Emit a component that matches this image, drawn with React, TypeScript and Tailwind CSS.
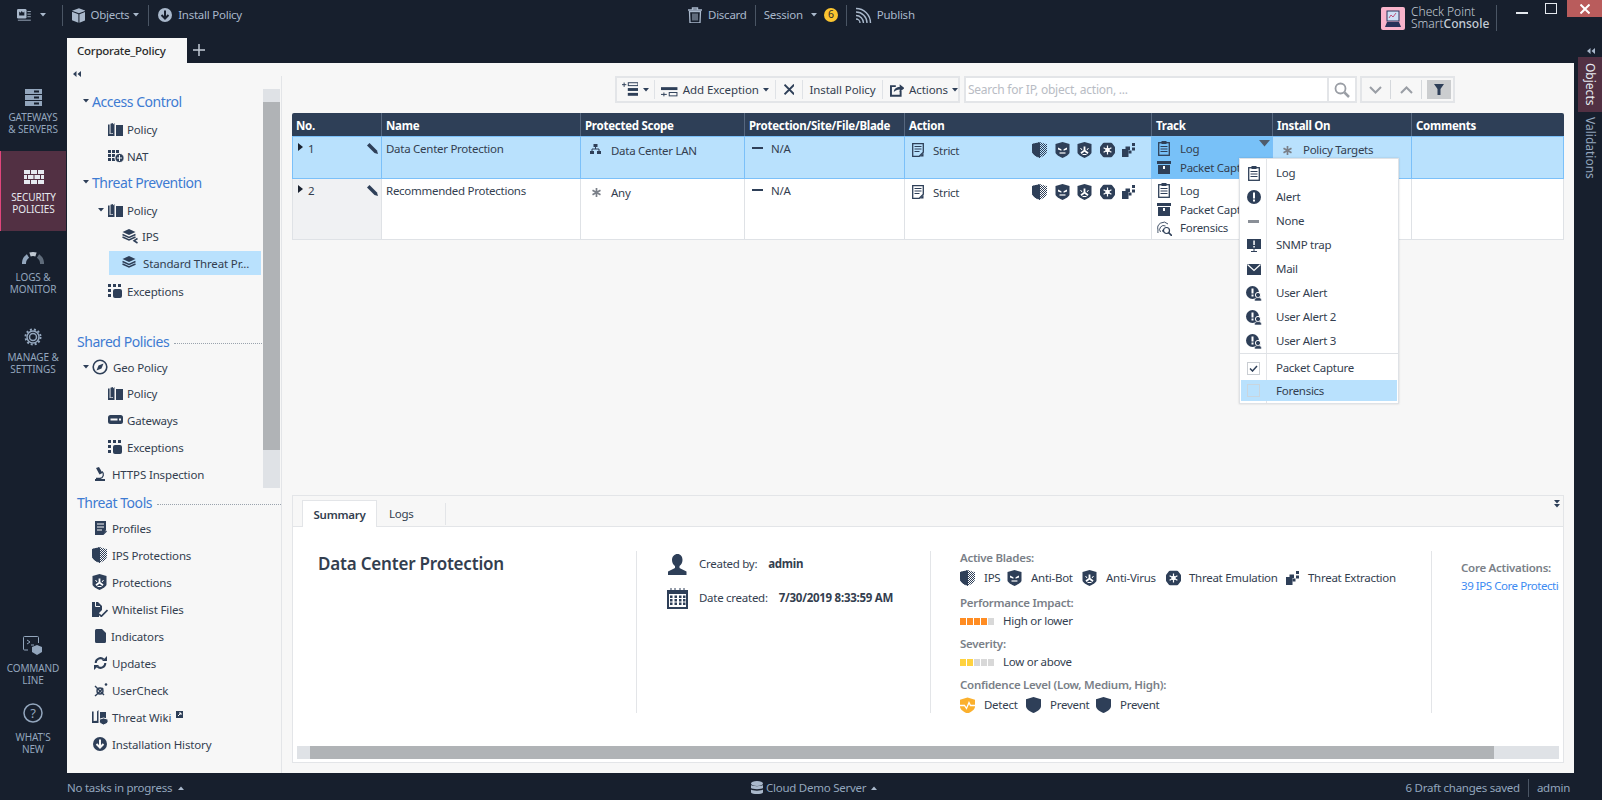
import React from "react";

const NAVY = "#2e3f58";
type P = { className?: string };

const Caret = ({ c = "#2e3f58", className = "" }: { c?: string; className?: string }) => (
  <svg width="6" height="4" viewBox="0 0 6 4" className={"shrink-0 " + className}><path d="M0 0h6L3 3.5z" fill={c} /></svg>
);
const CaretR = () => (
  <svg width="5" height="8" viewBox="0 0 5 8" className="shrink-0"><path d="M0 0l5 4-5 4z" fill="#1a2230" /></svg>
);
const Book = ({ className = "" }: P) => (
  <svg width="15" height="13" viewBox="0 0 15 13" className={className}>
    <path d="M0 1.5h1.6V11l3.4-.2V1.4L6.5 0v13H0z" fill={NAVY} />
    <path d="M2.5 0.8L5 0v10l-2.5.4z" fill={NAVY} />
    <rect x="8" y="2" width="7" height="11" fill={NAVY} />
  </svg>
);
const Nat = () => (
  <svg width="16" height="13" viewBox="0 0 16 13">
    {[0, 4, 8].flatMap((x) => [0, 4, 8].map((y) => <rect key={x + "-" + y} x={x} y={y} width="3" height="3" fill={NAVY} />))}
    <circle cx="11.5" cy="8" r="4.6" fill={NAVY} stroke="#f7f7f7" />
    <path d="M11.5 5v6M9 8h5" stroke="#f7f7f7" strokeWidth="1" />
  </svg>
);
const Exceptions = () => (
  <svg width="14" height="14" viewBox="0 0 14 14">
    <rect x="0" y="0" width="3" height="3" fill={NAVY} /><rect x="5" y="0" width="3" height="3" fill={NAVY} /><rect x="10" y="0" width="3" height="3" fill={NAVY} />
    <rect x="0" y="5" width="3" height="3" fill={NAVY} /><rect x="0" y="10" width="3" height="3" fill={NAVY} />
    <rect x="5" y="5" width="9" height="9" rx="2" fill={NAVY} />
  </svg>
);
const Layers = ({ tail = false }: { tail?: boolean }) => (
  <svg width="16" height="15" viewBox="0 0 16 15">
    <path d="M7 0l6.5 3L7 6 .5 3z" fill={NAVY} />
    <path d="M.5 5.500L7 8.500l6.500-3M.5 8L7 11l6.500-3" fill="none" stroke={NAVY} strokeWidth="1.400" />
    {tail && <path d="M15.500 9.500L12 11.700l3.500 2.300" fill="none" stroke={NAVY} strokeWidth="1.500" />}
  </svg>
);
const Compass = () => (
  <svg width="16" height="16" viewBox="0 0 16 16">
    <circle cx="8" cy="8" r="6.800" fill="none" stroke={NAVY} strokeWidth="1.600" />
    <path d="M11.500 4.500L9.500 9.500 4.500 11.500 6.500 6.500z" fill={NAVY} />
  </svg>
);
const Gateway = () => (
  <svg width="15" height="10" viewBox="0 0 15 10">
    <rect width="15" height="9" rx="2.500" fill={NAVY} /><rect x="2.500" y="3.500" width="7" height="2" fill="#f7f7f7" /><rect x="11" y="3.500" width="2" height="2" fill="#f7f7f7" />
  </svg>
);
const Micro = () => (
  <svg width="11" height="14" viewBox="0 0 11 14">
    <path d="M1 1l3-1 3.500 6-3 1.500z" fill={NAVY} /><path d="M7 4.500a4 4 0 0 1-2 7H1" fill="none" stroke={NAVY} strokeWidth="1.300" />
    <rect x="0" y="12" width="10" height="2" fill={NAVY} />
  </svg>
);
const Profile = () => (
  <svg width="12" height="14" viewBox="0 0 12 14">
    <path d="M0 0h11v9l-3 5H0z" fill={NAVY} />
    <path d="M2 3h7M2 6h7M2 9h5" stroke="#f7f7f7" />
    <path d="M8 13.500l3.500-3.500" stroke={NAVY} strokeWidth="1.300" />
  </svg>
);
const ShieldPath = "M7.500 0L15 2.200V9c0 3.400-4 5.600-7.500 7C4 14.600 0 12.400 0 9V2.200z";
const IpsShield = ({ id }: { id: string }) => (
  <svg width="15" height="16" viewBox="0 0 15 16">
    <defs><pattern id={id} width="2" height="2" patternUnits="userSpaceOnUse"><rect width="1" height="1" fill={NAVY} /><rect x="1" y="1" width="1" height="1" fill={NAVY} /></pattern></defs>
    <path d={ShieldPath} fill={"url(#" + id + ")"} />
    <path d="M8 .2L1.500 1.500C.5 1.800 0 2.200 0 3v6c0 3.400 4 5.600 8 6.800z" fill={NAVY} />
  </svg>
);
const Hex = "M.5 2L7.500 0l7 2v8.500c0 2-4.500 4.500-7 5.500-2.500-1-7-3.500-7-5.500z";
const AntiBot = () => (
  <svg width="15" height="16" viewBox="0 0 15 16">
    <path d={Hex} fill={NAVY} />
    <path d="M3 5.500l3.400 1.700v1.500L3 7.500zM12 5.500L8.600 7.200v1.500L12 7.500z" fill="#fff" />
    <path d="M4.500 11h6" stroke="#fff" strokeWidth="1.200" fill="none" />
  </svg>
);
const AntiVirus = () => (
  <svg width="15" height="16" viewBox="0 0 15 16">
    <path d={Hex} fill={NAVY} />
    <path d="M7.500 8.500V4.500M7.500 8.500l-3.500 2.800M7.500 8.500l3.500 2.800" stroke="#fff" strokeWidth="1.800" fill="none" />
    <path d="M3.500 6l1.500 2M11.500 6L10 8M5.500 12.500h4" stroke="#fff" strokeWidth="1" fill="none" />
  </svg>
);
const Emulation = () => (
  <svg width="15" height="16" viewBox="0 0 15 16">
    <path d="M4 .8h7c.5 0 1 .2 1.300.6l2.300 3c.3.4.4.8.4 1.300v4.600c0 .5-.1.9-.4 1.300l-2.300 3c-.3.4-.8.6-1.300.6H4c-.5 0-1-.2-1.300-.6L.4 11.600C.1 11.200 0 10.800 0 10.300V5.700c0-.5.1-.9.4-1.300l2.300-3C3 1 3.500.8 4 .8z" fill={NAVY} />
    <circle cx="7.500" cy="8" r="2.200" fill="#fff" />
    <path d="M7.500 3.500v9M3.600 5.700l7.800 4.600M11.400 5.700l-7.800 4.600" stroke="#fff" strokeWidth="1.200" />
  </svg>
);
const Extraction = () => (
  <svg width="14" height="14" viewBox="0 0 14 14">
    <path d="M0 6h3.500V3.500H8V7H6.500v7H0z" fill={NAVY} /><rect x="6.500" y="7.500" width="3" height="3" fill={NAVY} /><rect x="10" y="0" width="3" height="3" fill={NAVY} /><rect x="10" y="4.500" width="3" height="3" fill={NAVY} />
  </svg>
);
const ShieldPlain = ({ c = NAVY }: { c?: string }) => (
  <svg width="15" height="16" viewBox="0 0 15 16"><path d={ShieldPath} fill={c} /></svg>
);
const ShieldDetect = () => (
  <svg width="15" height="17" viewBox="0 0 15 16">
    <path d={ShieldPath} fill="#fbb02d" />
    <path d="M0 8h4.500l2 3 2.500-6 1.500 3H15" fill="none" stroke="#fff" strokeWidth="1.300" />
  </svg>
);
const Whitelist = () => (
  <svg width="16" height="15" viewBox="0 0 16 15">
    <path d="M0 0h6l4 4v4L7 11v4H0z" fill={NAVY} /><path d="M3.500 0v4.500H8" fill="none" stroke="#f7f7f7" />
    <path d="M7 12l2.300 2.300L15.500 8" fill="none" stroke={NAVY} strokeWidth="1.700" />
  </svg>
);
const Indicator = () => (
  <svg width="11" height="14" viewBox="0 0 11 14"><path d="M1.500 0H7l4 4v8.500a1.500 1.500 0 0 1-1.500 1.500h-8A1.500 1.500 0 0 1 0 12.500v-11A1.500 1.500 0 0 1 1.500 0z" fill={NAVY} /></svg>
);
const Updates = () => (
  <svg width="13" height="14" viewBox="0 0 13 14">
    <path d="M1.700 7a4.800 4.800 0 0 1 8-3.600M11.300 7a4.800 4.800 0 0 1-8 3.600" fill="none" stroke={NAVY} strokeWidth="2" />
    <path d="M8 5h5V0zM5 9H0v5z" fill={NAVY} />
  </svg>
);
const UserCheckI = () => (
  <svg width="14" height="14" viewBox="0 0 14 14">
    <ellipse cx="6" cy="8" rx="3" ry="3" fill="none" stroke={NAVY} strokeWidth="1.400" />
    <path d="M1 3l9 9M1 13c2-2 6-5 8-8" stroke={NAVY} strokeWidth="1.400" fill="none" />
    <circle cx="12" cy="1.500" r="1.300" fill={NAVY} />
  </svg>
);
const Wiki = () => (
  <svg width="16" height="15" viewBox="0 0 16 15">
    <path d="M0 1.500h1.600V11l3.400-.2V1.400L6.500 0v13H0z" fill={NAVY} /><rect x="8" y="2" width="6" height="11" fill={NAVY} />
    <path d="M11.500 8l4.500 1.200v2.400c0 1.500-2.500 2.800-4.500 3.400-2-.6-4-1.900-4-3.400V9.200z" fill={NAVY} stroke="#f7f7f7" />
  </svg>
);
const DownCircle = ({ c = NAVY, fg = "#f7f7f7", s = 14 }: { c?: string; fg?: string; s?: number }) => (
  <svg width={s} height={s} viewBox="0 0 14 14">
    <circle cx="7" cy="7" r="7" fill={c} />
    <path d="M7 2.500v8M3.500 7L7 10.500 10.500 7" fill="none" stroke={fg} strokeWidth="2" />
  </svg>
);
const Pencil = () => (
  <svg width="11" height="11" viewBox="0 0 11 11"><path d="M2.500 0L0 2.500l7.500 7.500L11 11l-1-3.500z" fill={NAVY} /></svg>
);
const Strict = () => (
  <svg width="12" height="14" viewBox="0 0 12 14">
    <path d="M.7.700h10.600v8.600l-4 4H.7z" fill="none" stroke={NAVY} strokeWidth="1.300" />
    <path d="M2.500 3.500h7M2.500 6h7M2.500 8.500h5" stroke={NAVY} /><path d="M8 13.500l3.500-3.500V13.500z" fill={NAVY} />
  </svg>
);
const LogI = () => (
  <svg width="12" height="15" viewBox="0 0 12 15">
    <rect x=".7" y="1.700" width="10.600" height="12.600" fill="none" stroke={NAVY} strokeWidth="1.300" />
    <rect x="3.500" y="0" width="5" height="3" fill={NAVY} />
    <path d="M2.500 5.500h7M2.500 8h7M2.500 10.500h7" stroke={NAVY} />
  </svg>
);
const Archive = () => (
  <svg width="14" height="13" viewBox="0 0 14 13">
    <rect width="14" height="3" fill={NAVY} /><rect x="1" y="4" width="12" height="9" fill={NAVY} /><rect x="6" y="5" width="2" height="3" fill="#fff" />
  </svg>
);
const Forensic = () => (
  <svg width="15" height="15" viewBox="0 0 15 15">
    <path d="M1 9a6 6 0 0 1 10-6M1 12a8 8 0 0 1 0-3M3.500 11a4 4 0 0 1 5-6M6 11a2 2 0 0 1 1-3" fill="none" stroke={NAVY} strokeWidth=".9" />
    <circle cx="9.500" cy="9.500" r="3" fill="none" stroke={NAVY} strokeWidth="1.200" /><path d="M11.500 11.500L15 15" stroke={NAVY} strokeWidth="1.600" />
  </svg>
);
const Star = () => (
  <svg width="9" height="9" viewBox="0 0 9 9"><path d="M4.500 0v9M.5 2.200l8 4.600M8.500 2.200l-8 4.600" stroke="#7a7f88" strokeWidth="1.700" /></svg>
);
const Net = () => (
  <svg width="11" height="10" viewBox="0 0 11 10">
    <rect x="3.500" y="0" width="4" height="3" fill={NAVY} /><rect x="0" y="7" width="4" height="3" fill={NAVY} /><rect x="7" y="7" width="4" height="3" fill={NAVY} />
    <path d="M5.500 3v2M2 7V5h7v2" stroke={NAVY} fill="none" />
  </svg>
);
const AlertI = () => (
  <svg width="14" height="14" viewBox="0 0 14 14"><circle cx="7" cy="7" r="7" fill={NAVY} /><rect x="6" y="2.500" width="2" height="6" fill="#fff" /><rect x="6" y="9.500" width="2" height="2" fill="#fff" /></svg>
);
const Snmp = () => (
  <svg width="14" height="13" viewBox="0 0 14 13"><rect width="14" height="10" fill={NAVY} /><rect x="6.300" y="1.500" width="1.500" height="4.500" fill="#fff" /><rect x="6.300" y="7" width="1.500" height="1.500" fill="#fff" /><path d="M4 12.500h6M7 10v2.500" stroke={NAVY} /></svg>
);
const Mail = () => (
  <svg width="14" height="11" viewBox="0 0 14 11"><rect width="14" height="11" fill={NAVY} /><path d="M.5.500L7 6.500 13.500.5" fill="none" stroke="#fff" strokeWidth="1.200" /></svg>
);
const UserAlert = () => (
  <svg width="16" height="15" viewBox="0 0 16 15">
    <circle cx="6.500" cy="6.500" r="6.500" fill={NAVY} /><rect x="5.500" y="2.500" width="2" height="5" fill="#fff" /><rect x="5.500" y="8.500" width="2" height="2" fill="#fff" />
    <circle cx="12" cy="9" r="2.600" fill={NAVY} stroke="#fff" /><path d="M8.500 15c0-3 1.500-3.400 3.500-3.400s3.500.4 3.500 3.400z" fill={NAVY} stroke="#fff" strokeWidth=".6" />
  </svg>
);

const IconCol = ({ children, cls }: { children: React.ReactNode; cls: string }) => (
  <span className={"flex items-center justify-center shrink-0 " + cls}>{children}</span>
);

const Rail = ({ icon, lines, active, cls = "h-[80px]", gap = "mt-[5px]" }: { icon: React.ReactNode; lines: string[]; active?: boolean; cls?: string; gap?: string }) => (
  <div className={"flex flex-col items-center pt-[17px] w-[66px] text-[10px] tracking-[-0.1px] leading-[12px] " + cls + (active ? " bg-[#523043] border-l border-[#e0457b] text-[#e6eaf0]" : " text-[#93a6bd]")}>
    <div className="h-[18px] flex items-center justify-center">{icon}</div>
    <div className={"text-center " + gap}>{lines.map((l) => <div key={l}>{l}</div>)}</div>
  </div>
);

const TreeRow = ({ cls, icon, label, iconX }: { cls: string; icon?: React.ReactNode; label: string; iconX?: string }) => (
  <div className={"flex items-center h-[24px] text-[11.500px] tracking-[-0.15px] text-[#333e4f] " + cls}>
    {icon}
    <span className={"pt-[2px] " + iconX}>{label}</span>
  </div>
);
const SecHead = ({ label, cls }: { label: string; cls: string }) => (
  <div className={"flex items-center h-[24px] pl-[10px] pb-[2px] text-[14px] tracking-[-0.45px] text-[#3e7bd2] " + cls}>
    <span>{label}</span>
    <span className="flex-1 ml-[5px] mt-[4px] border-t border-dotted border-[#9aa3ad]" />
  </div>
);

const ActionIcons = ({ id }: { id: string }) => (
  <div className="flex items-center gap-[7.500px] ml-[73px] -mt-px">
    <IpsShield id={id} /><AntiBot /><AntiVirus /><Emulation /><Extraction />
  </div>
);

const Bar = ({ on, c }: { on: number; c: string }) => (
  <div className="flex w-[34px] h-[7px] gap-px">
    {[0, 1, 2, 3, 4].map((i) => <div key={i} className={"flex-1"} style={{ backgroundColor: i < on ? c : "#d8d8d8" }} />)}
  </div>
);

const Div = ({ cls = "mx-[8px]" }: { cls?: string }) => <span className={"w-px h-[21px] bg-[#4a5564] " + cls} />;

const menu: [React.ReactNode, string][] = [
  [<LogI />, "Log"],
  [<AlertI />, "Alert"],
  [<span className="w-[11px] h-[3px] bg-[#8a8f97]" />, "None"],
  [<Snmp />, "SNMP trap"],
  [<Mail />, "Mail"],
  [<UserAlert />, "User Alert"],
  [<UserAlert />, "User Alert 2"],
  [<UserAlert />, "User Alert 3"],
];

const COLS = "grid grid-cols-[90px_199px_164px_160px_247px_121px_139px_1fr]";

export default function App() {
  return (
    <div className="w-[1602px] h-[800px] overflow-hidden flex flex-col bg-[#171f2d] [font-family:'Noto_Sans',sans-serif] text-[#333e4f]">
      {/* Title bar */}
      <div className="h-[38px] flex items-start text-[#a9b8cb] text-[11.500px] tracking-[-0.25px] shrink-0">
        <div className="flex items-center h-[30px] pl-[17px] w-[242px] shrink-0 whitespace-nowrap">
          <svg width="17" height="14" viewBox="0 0 17 14"><rect width="11" height="11" rx="1.500" fill="#a9b8cb" /><path d="M2.500 3l1.500 1.500L5.500 2.500 7 4.500 8.500 3V7.500h-6z" fill="#171f2d" /><path d="M12 3h4M12 6h4M12 9h4M1 13h15" stroke="#a9b8cb" /></svg>
          <Caret c="#a9b8cb" className="ml-[8px]" />
          <Div cls="ml-[16px]" />
          <svg className="ml-[9px]" width="16" height="17" viewBox="0 0 16 17"><path d="M8 0l8 3-8 3-8-3z" fill="#a9b8cb" /><path d="M0 4.200l7.400 2.800V17L0 14zM16 4.200L8.600 7V17l7.400-3z" fill="#a9b8cb" /></svg>
          <span className="ml-[5px]">Objects</span>
          <Caret c="#a9b8cb" className="ml-[4px]" />
          <Div cls="ml-[9px]" />
          <span className="ml-[9px]"><DownCircle c="#a9b8cb" fg="#171f2d" /></span>
          <span className="ml-[6px]">Install Policy</span>
        </div>
        <div className="flex items-center h-[30px] ml-[446px] whitespace-nowrap">
          <svg width="14" height="16" viewBox="0 0 14 16"><path d="M0 3h14M4.500 3V1h5v2" fill="none" stroke="#a9b8cb" strokeWidth="1.400" /><path d="M1.500 4.500h11L12 16H2z" fill="none" stroke="#a9b8cb" strokeWidth="1.300" /><path d="M5 6.500v7M7 6.500v7M9 6.500v7" stroke="#a9b8cb" /></svg>
          <span className="ml-[6px]">Discard</span>
          <Div cls="ml-[8px]" />
          <span className="ml-[8px]">Session</span>
          <Caret c="#a9b8cb" className="ml-[8px]" />
          <span className="ml-[7px] w-[14px] h-[14px] rounded-full bg-[#fbc530] text-[#2a2a2a] text-[10.500px] flex items-center justify-center">6</span>
          <Div cls="ml-[8px]" />
          <svg className="ml-[9px]" width="16" height="16" viewBox="0 0 16 16"><path d="M0 1.500A14.500 14.500 0 0 1 14.500 16M0 5a11 11 0 0 1 11 11M0 8.500A7.500 7.500 0 0 1 7.500 16M0 12a4 4 0 0 1 4 4" fill="none" stroke="#a9b8cb" strokeWidth="1.400" /></svg>
          <span className="ml-[5px]">Publish</span>
        </div>
        <div className="flex items-start ml-auto h-[30px] tracking-normal">
          <div className="w-[24px] h-[23px] mt-[7px] rounded-[2px] bg-[#f9b4cb] flex items-center justify-center">
            <svg width="18" height="18" viewBox="0 0 18 18"><rect x="3" y="1" width="12" height="10" fill="#cfe0f5" stroke="#27325a" /><path d="M5 8l2-3 2 2 3-4" stroke="#c0507a" fill="none" /><path d="M1 17l2-5h12l2 5z" fill="#27325a" /></svg>
          </div>
          <div className="ml-[6px] mt-[6px] text-[12px] leading-[12px] text-[#c4ccd6] w-[78px] whitespace-nowrap font-light">
            <div>Check Point</div>
            <div>Smart<span className="font-medium">Console</span></div>
          </div>
          <span className="w-px h-[26px] mt-[5px] ml-[7px] bg-[#4a5564]" />
          <span className="w-[12px] h-[2px] mt-[12px] ml-[19px] bg-[#e4e8ee]" />
          <span className="w-[12px] h-[11px] mt-[3px] ml-[17px] border border-[#e4e8ee]" />
          <span className="w-[35px] h-[17px] ml-[10px] bg-[#b95c5c] flex items-center justify-center">
            <svg width="10" height="10" viewBox="0 0 10 10"><path d="M.5.500l9 9M9.500.500l-9 9" stroke="#fff" strokeWidth="2" /></svg>
          </span>
        </div>
      </div>

      {/* Middle */}
      <div className="flex-1 flex min-h-0">
        {/* Left rail */}
        <div className="w-[67px] shrink-0 flex flex-col pt-[33px] pb-[6px]">
          <Rail lines={["GATEWAYS", "& SERVERS"]} icon={<svg width="17" height="17" viewBox="0 0 17 17">{[0, 6, 12].map((y) => <g key={y}><rect y={y} width="17" height="5" fill="#93a6bd" /><rect x="9" y={y + 1.500} width="5" height="2" fill="#171f2d" /></g>)}</svg>} />
          <Rail active lines={["SECURITY", "POLICIES"]} icon={<svg width="20" height="14" viewBox="0 0 20 14" fill="#e6eaf0"><rect width="6" height="4" /><rect x="7" width="6" height="4" /><rect x="14" width="6" height="4" /><rect y="5" width="3" height="4" /><rect x="4" y="5" width="5.500" height="4" /><rect x="10.500" y="5" width="5.500" height="4" /><rect x="17" y="5" width="3" height="4" /><rect y="10" width="6" height="4" /><rect x="7" y="10" width="6" height="4" /><rect x="14" y="10" width="6" height="4" /></svg>} />
          <Rail lines={["LOGS &", "MONITOR"]} icon={<svg width="22" height="13" viewBox="0 0 22 13" fill="none" strokeWidth="4" stroke="#93a6bd"><path d="M2 13A9 9 0 0 1 6 5" /><path d="M8 3.500A9 9 0 0 1 14 3.500" stroke="#c0c8d2" /><path d="M16 5A9 9 0 0 1 20 13" stroke="#5f6b7a" /></svg>} />
          <Rail lines={["MANAGE &", "SETTINGS"]} icon={<svg width="18" height="18" viewBox="0 0 18 18" fill="none" stroke="#93a6bd"><circle cx="9" cy="9" r="6" strokeWidth="1.500" /><circle cx="9" cy="9" r="3.500" strokeWidth="1.500" /><circle cx="9" cy="9" r="7.500" strokeWidth="2" strokeDasharray="2 2" /></svg>} />
          <div className="mt-auto" />
          <Rail cls="h-[68px]" gap="mt-[8px]" lines={["COMMAND", "LINE"]} icon={<svg width="20" height="19" viewBox="0 0 20 19" fill="none"><path d="M5 14H1.500a1 1 0 0 1-1-1V1.500a1 1 0 0 1 1-1h13a1 1 0 0 1 1 1V7" stroke="#93a6bd" /><path d="M4 4l3 2-3 2M8 9h3" stroke="#93a6bd" /><path d="M14 9l5 2v5l-5 3-5-3v-5z" fill="#93a6bd" /></svg>} />
          <Rail gap="mt-[9px]" lines={["WHAT'S", "NEW"]} icon={<svg width="20" height="20" viewBox="0 0 20 20"><circle cx="10" cy="10" r="9" fill="none" stroke="#93a6bd" strokeWidth="1.500" /><text x="10" y="14.500" textAnchor="middle" fontSize="13" fill="#93a6bd">?</text></svg>} />
        </div>

        {/* Centre */}
        <div className="flex-1 min-w-0 flex flex-col">
          <div className="h-[25px] flex shrink-0">
            <div className="w-[120px] bg-[#f7f7f7] text-[#2b2b2b] font-medium text-[11.500px] tracking-[-0.25px] flex items-center pl-[10px]">Corporate_Policy</div>
            <svg className="ml-[6px] mt-[6px]" width="12" height="12" viewBox="0 0 12 12"><path d="M6 0v12M0 6h12" stroke="#c3cbd6" strokeWidth="1.500" /></svg>
          </div>
          <div className="flex-1 min-h-0 flex bg-[#f7f7f7]">
            {/* Sidebar */}
            <div className="w-[214px] shrink-0 flex flex-col">
              <div className="h-[26px] pl-[6px] pt-[8px]">
                <svg width="8" height="6" viewBox="0 0 8 6" fill="#2e3f58"><path d="M3.500 0v6L0 3zM8 0v6L4.500 3z" /></svg>
              </div>
              <div className="flex h-[399px]">
                <div className="w-[195px] pt-px">
                  <div className="flex items-center h-[24px] pl-[16px] pb-[2px] text-[14px] tracking-[-0.45px] text-[#3e7bd2]"><Caret /><span className="ml-[3px]">Access Control</span></div>
                  <TreeRow cls="mt-[3px] pl-[41px]" icon={<Book />} iconX="ml-[4px]" label="Policy" />
                  <TreeRow cls="mt-[3px] pl-[41px]" icon={<Nat />} iconX="ml-[3px]" label="NAT" />
                  <div className="flex items-center h-[24px] mt-[3px] pl-[16px] pb-[2px] text-[14px] tracking-[-0.45px] text-[#3e7bd2]"><Caret /><span className="ml-[3px]">Threat Prevention</span></div>
                  <TreeRow cls="mt-[3px] pl-[31px]" icon={<><Caret className="mr-[4px]" /><Book /></>} iconX="ml-[4px]" label="Policy" />
                  <TreeRow cls="mt-[2px] pl-[55px]" icon={<Layers tail />} iconX="ml-[4px]" label="IPS" />
                  <div className="ml-[42px] mt-[3px] h-[24px] w-[152px] bg-[#b9e1fd] flex items-center pl-[13px] text-[11.500px] tracking-[-0.15px] whitespace-nowrap"><Layers /><span className="ml-[5px] pt-[2px]">Standard Threat Pr...</span></div>
                  <TreeRow cls="mt-[4px] pl-[41px]" icon={<Exceptions />} iconX="ml-[5px]" label="Exceptions" />
                  <SecHead cls="mt-[27px]" label="Shared Policies" />
                  <TreeRow cls="mt-px pl-[16px]" icon={<><Caret className="mr-[3px]" /><Compass /></>} iconX="ml-[5px]" label="Geo Policy" />
                  <TreeRow cls="mt-[2px] pl-[41px]" icon={<Book />} iconX="ml-[4px]" label="Policy" />
                  <TreeRow cls="mt-[3px] pl-[41px]" icon={<Gateway />} iconX="ml-[4px]" label="Gateways" />
                  <TreeRow cls="mt-[3px] pl-[41px]" icon={<Exceptions />} iconX="ml-[5px]" label="Exceptions" />
                  <TreeRow cls="mt-[3px] pl-[28px]" icon={<Micro />} iconX="ml-[6px]" label="HTTPS Inspection" />
                </div>
                <div className="w-[17px] ml-px flex flex-col bg-[#dfe2e6]">
                  <div className="h-[13px]" />
                  <div className="h-[348px] bg-[#b0b3b6]" />
                </div>
              </div>
              <SecHead cls="mt-[3px]" label="Threat Tools" />
              <TreeRow cls="mt-px pl-[28px]" icon={<IconCol cls="w-[12px]"><Profile /></IconCol>} iconX="ml-[5px]" label="Profiles" />
              <TreeRow cls="mt-[3px] pl-[25px]" icon={<IconCol cls="w-[15px]"><IpsShield id="side" /></IconCol>} iconX="ml-[5px]" label="IPS Protections" />
              <TreeRow cls="mt-[3px] pl-[25px]" icon={<IconCol cls="w-[15px]"><AntiVirus /></IconCol>} iconX="ml-[5px]" label="Protections" />
              <TreeRow cls="mt-[3px] pl-[25px]" icon={<IconCol cls="w-[16px]"><Whitelist /></IconCol>} iconX="ml-[4px]" label="Whitelist Files" />
              <TreeRow cls="mt-[3px] pl-[28px]" icon={<Indicator />} iconX="ml-[5px]" label="Indicators" />
              <TreeRow cls="mt-[3px] pl-[27px]" icon={<Updates />} iconX="ml-[5px]" label="Updates" />
              <TreeRow cls="mt-[3px] pl-[27px]" icon={<UserCheckI />} iconX="ml-[4px]" label="UserCheck" />
              <div className="flex items-center h-[24px] mt-[3px] pl-[25px] text-[11.500px] tracking-[-0.15px]"><Wiki /><span className="ml-[4px] pt-[2px]">Threat Wiki</span>
                <svg className="ml-[5px] mb-[6px]" width="7" height="7" viewBox="0 0 7 7"><rect width="7" height="7" fill={NAVY} /><path d="M2 5l3-3M3 2h2v2" stroke="#fff" fill="none" /></svg>
              </div>
              <TreeRow cls="mt-[3px] pl-[26px]" icon={<DownCircle />} iconX="ml-[5px]" label="Installation History" />
            </div>

            {/* Main */}
            <div className="flex-1 min-w-0 mt-[13px] border-l border-[#e3e5e8] flex flex-col pl-[10px] pr-[10px] pb-[10px]">
              {/* Toolbar */}
              <div className="h-[27px] flex items-stretch shrink-0 ml-[323px]">
                <div className="w-[345px] border-2 border-[#e3e5e8] flex items-center text-[11.500px] tracking-[-0.08px] whitespace-nowrap">
                  <svg className="ml-[5px]" width="17" height="15" viewBox="0 0 17 15" fill={NAVY}><path d="M0 2.500h4.500M2.200 .3v4.500" stroke={NAVY} fill="none" /><rect x="6.500" y=".5" width="10" height="3" fill="none" stroke={NAVY} /><rect x="6" y="6" width="11" height="3" /><rect x="6" y="11" width="11" height="3" /></svg>
                  <Caret className="ml-[5px]" />
                  <span className="w-px h-[19px] bg-[#dfe2e6] ml-[5px]" />
                  <svg className="ml-[6px] mt-[4px]" width="17" height="10" viewBox="0 0 17 10" fill={NAVY}><rect y="0" width="17" height="3" /><path d="M0 7.500h6M3 5.500v4" stroke={NAVY} fill="none" /><rect x="8.500" y="5.500" width="8" height="3.500" fill="none" stroke={NAVY} /></svg>
                  <span className="ml-[5px]">Add Exception</span>
                  <Caret className="ml-[4px]" />
                  <span className="w-px h-[19px] bg-[#dfe2e6] ml-[6px]" />
                  <svg className="ml-[8px]" width="11" height="11" viewBox="0 0 11 11"><path d="M.5.500l10 10M10.500.5l-10 10" stroke={NAVY} strokeWidth="2" /></svg>
                  <span className="w-px h-[19px] bg-[#dfe2e6] ml-[8px]" />
                  <span className="ml-[6px]">Install Policy</span>
                  <span className="w-px h-[19px] bg-[#dfe2e6] ml-[6px]" />
                  <svg className="ml-[7px]" width="15" height="14" viewBox="0 0 15 14" fill="none"><path d="M6 3H1v10h10V8" stroke={NAVY} strokeWidth="2" /><path d="M4 9c0-3 3-5 6-5V1l5 4-5 4V6.500C7.500 6.500 5.500 7.500 4 9z" fill={NAVY} /></svg>
                  <span className="ml-[5px]">Actions</span>
                  <Caret className="ml-[4px]" />
                </div>
                <div className="w-[393px] ml-[4px] border-2 border-[#e3e5e8] bg-white flex items-center text-[12px] tracking-[-0.25px] text-[#b8bcc4]">
                  <span className="flex-1 pl-[2px]">Search for IP, object, action, ...</span>
                  <span className="w-[28px] h-full border-l-2 border-[#e3e5e8] flex items-center justify-center">
                    <svg width="16" height="16" viewBox="0 0 16 16" fill="none" stroke="#9a9ea5"><circle cx="6.500" cy="6.500" r="5" strokeWidth="1.800" /><path d="M10.500 10.500L15 15" strokeWidth="2.500" /></svg>
                  </span>
                </div>
                <div className="w-[95px] ml-[3px] border-2 border-[#e3e5e8] flex items-center">
                  <svg className="ml-[7px]" width="13" height="8" viewBox="0 0 13 8" fill="none" stroke="#9a9ea5" strokeWidth="2"><path d="M1 1l5.500 5.500L12 1" /></svg>
                  <span className="w-px h-[19px] bg-[#d5d8dc] ml-[8px]" />
                  <svg className="ml-[9px]" width="13" height="8" viewBox="0 0 13 8" fill="none" stroke="#9a9ea5" strokeWidth="2"><path d="M1 7l5.500-5.500L12 7" /></svg>
                  <span className="w-px h-[19px] bg-[#d5d8dc] ml-[8px]" />
                  <span className="ml-[5px] w-[24px] h-[19px] bg-[#cbcdcf] flex items-center justify-center">
                    <svg width="10" height="11" viewBox="0 0 10 11" fill={NAVY}><path d="M0 0h10L6.500 5v6h-3V5z" /></svg>
                  </span>
                </div>
              </div>

              {/* Table */}
              <div className="relative mt-[10px] shrink-0 text-[11.500px] tracking-[-0.27px]">
                <div className={COLS + " h-[23px] bg-[#2e3f57] rounded-t-[2px] text-white font-bold text-[11.500px] items-stretch"}>
                  {["No.", "Name", "Protected Scope", "Protection/Site/File/Blade", "Action", "Track", "Install On", "Comments"].map((h, i) => (
                    <div key={h} className={"flex items-center pl-[4px] pt-[2px] whitespace-nowrap overflow-hidden " + (i < 7 ? "border-r border-[#56677f]" : "")}>{h}</div>
                  ))}
                </div>
                {/* Row 1 */}
                <div className={COLS + " h-[43px] bg-[#b9e1fd] border-y border-[#7bc0f9]"}>
                  <div className="border-r border-l border-[#7bc0f9] flex items-start pl-[5px] pt-[3px] h-[41px]"><span className="mt-[3px]"><CaretR /></span><span className="ml-[5px]">1</span><span className="ml-auto mr-[3px] mt-[3px]"><Pencil /></span></div>
                  <div className="border-r border-[#7bc0f9] pl-[4px] pt-[3px]">Data Center Protection</div>
                  <div className="border-r border-[#7bc0f9] pl-[9px] pt-[5px] flex items-start"><span className="mt-[2px] w-[11px]"><Net /></span><span className="ml-[10px]">Data Center LAN</span></div>
                  <div className="border-r border-[#7bc0f9] pl-[7px] pt-[3px] flex items-start"><span className="mt-[7px] w-[11px] h-[2px] bg-[#2e3f58]" /><span className="ml-[8px]">N/A</span></div>
                  <div className="border-r border-[#7bc0f9] pl-[7px] pt-[6px] flex items-start"><Strict /><span className="ml-[9px] -mt-px">Strict</span><ActionIcons id="r1" /></div>
                  <div className="border-r border-[#7bc0f9] bg-[#78c1f8] relative pl-[5px] pt-[2px] overflow-hidden h-[41px]">
                    <div className="flex items-center h-[19px]"><span className="w-[14px] flex justify-center"><LogI /></span><span className="ml-[9px]">Log</span></div>
                    <div className="flex items-center h-[19px] whitespace-nowrap"><Archive /><span className="ml-[9px]">Packet Capture</span></div>
                    <svg className="absolute top-[3px] right-[2px]" width="11" height="7" viewBox="0 0 11 7"><path d="M0 0h11L5.500 6.500z" fill="#4f5b6b" /></svg>
                  </div>
                  <div className="border-r border-[#7bc0f9] pl-[10px] pt-[4px] flex items-start"><span className="mt-[5px]"><Star /></span><span className="ml-[11px]">Policy Targets</span></div>
                  <div className="border-r border-[#7bc0f9]" />
                </div>
                {/* Row 2 */}
                <div className={COLS + " h-[61px] bg-white border-b border-[#dfe2e6]"}>
                  <div className="border-r border-l border-[#dfe2e6] bg-[#f0f1f3] flex items-start pl-[5px] pt-[3px]"><span className="mt-[3px]"><CaretR /></span><span className="ml-[5px]">2</span><span className="ml-auto mr-[3px] mt-[3px]"><Pencil /></span></div>
                  <div className="border-r border-[#dfe2e6] pl-[4px] pt-[3px]">Recommended Protections</div>
                  <div className="border-r border-[#dfe2e6] pl-[11px] pt-[5px] flex items-start"><span className="mt-[4px]"><Star /></span><span className="ml-[10px]">Any</span></div>
                  <div className="border-r border-[#dfe2e6] pl-[7px] pt-[3px] flex items-start"><span className="mt-[7px] w-[11px] h-[2px] bg-[#2e3f58]" /><span className="ml-[8px]">N/A</span></div>
                  <div className="border-r border-[#dfe2e6] pl-[7px] pt-[6px] flex items-start"><Strict /><span className="ml-[9px] -mt-px">Strict</span><ActionIcons id="r2" /></div>
                  <div className="border-r border-[#dfe2e6] pl-[5px] pt-[2px] overflow-hidden">
                    <div className="flex items-center h-[19px]"><span className="w-[14px] flex justify-center"><LogI /></span><span className="ml-[9px]">Log</span></div>
                    <div className="flex items-center h-[19px] whitespace-nowrap"><Archive /><span className="ml-[9px]">Packet Capture</span></div>
                    <div className="flex items-center h-[18px]"><Forensic /><span className="ml-[8px]">Forensics</span></div>
                  </div>
                  <div className="border-r border-[#dfe2e6]" />
                  <div className="border-r border-[#dfe2e6]" />
                </div>

                {/* Menu */}
                <div className="absolute left-[947px] top-[45px] w-[160px] h-[246px] bg-white border border-[#dfe2e6] shadow-[0_0_2px_rgba(0,0,0,0.15)]">
                  <div className="absolute left-[26px] top-0 bottom-0 w-px bg-[#e3e5e8]" />
                  <div className="pt-[2px]">
                    {menu.map(([ic, l]) => (
                      <div key={l} className="flex items-center h-[24px]">
                        <span className="w-[27px] flex justify-center">{ic}</span>
                        <span className="ml-[9px]">{l}</span>
                      </div>
                    ))}
                    <div className="relative h-px bg-[#dfe2e6]" />
                    <div className="flex items-center h-[24px] mt-[2px]">
                      <span className="w-[27px] flex justify-center"><span className="w-[13px] h-[13px] border border-[#c9cdd2] flex items-center justify-center"><svg width="9" height="7" viewBox="0 0 9 7" fill="none"><path d="M1 3.500L3.500 6 8 1" stroke={NAVY} strokeWidth="1.500" /></svg></span></span>
                      <span className="ml-[9px]">Packet Capture</span>
                    </div>
                    <div className="flex items-center h-[21px] mx-px bg-[#b9e1fd] relative">
                      <span className="w-[25px] flex justify-center"><span className="w-[13px] h-[13px] border border-[#c9d5de]" /></span>
                      <span className="ml-[10px]">Forensics</span>
                    </div>
                  </div>
                </div>
              </div>

              <div className="flex-1" />

              {/* Details */}
              <div className="h-[268px] border border-[#e3e5e8] flex flex-col shrink-0 text-[11.500px] tracking-[-0.27px]">
                <div className="h-[31px] border-b border-[#e3e5e8] flex items-end pl-[9px] relative shrink-0">
                  <div className="w-[75px] h-[27px] -mb-px border border-b-0 border-[#e3e5e8] bg-white flex items-center justify-center font-semibold pt-[2px]">Summary</div>
                  <div className="w-[69px] h-[22px] mb-[1px] border-r border-[#e3e5e8] pl-[12px] flex items-center">Logs</div>
                  <svg className="absolute right-[3px] top-[4px]" width="6" height="8" viewBox="0 0 6 8" fill={NAVY}><path d="M0 0h6L3 3.500zM0 4h6L3 7.500z" /></svg>
                </div>
                <div className="flex-1 bg-white flex flex-col min-h-0 pl-[4px] pr-[4px]">
                  <div className="flex h-[162px] mt-[24px] shrink-0 overflow-hidden">
                    <div className="w-[340px] shrink-0 border-r border-[#e3e5e8] pl-[21px] pt-px">
                      <div className="text-[17px] tracking-[-0.2px] font-semibold leading-[24px] text-[#333e4f]">Data Center Protection</div>
                    </div>
                    <div className="w-[294px] shrink-0 border-r border-[#e3e5e8] pl-[30px] pt-px">
                      <div className="flex items-center h-[24px]">
                        <svg width="21" height="21" viewBox="0 0 21 21" fill={NAVY}><path d="M10.500 0c3 0 5 2.500 5 6 0 3-1.500 5-3 6v2l7 3.500V21H1v-3.500L8 14v-2C6.500 11 5 9 5 6c0-3.500 2.500-6 5.500-6z" /></svg>
                        <span className="ml-[11px]">Created by:</span><span className="ml-[11px] font-bold">admin</span>
                      </div>
                      <div className="flex items-center h-[24px] mt-[10px]">
                        <svg width="21" height="21" viewBox="0 0 21 21" fill={NAVY}><path d="M0 2h21v19H0z" /><rect x="2" y="6" width="17" height="13" fill="#fff" />{[3, 7.500, 12, 16].flatMap((x) => [7.500, 11, 14.500].map((y) => <rect key={x + "_" + y} x={x} y={y} width="2.500" height="2.500" fill={NAVY} />))}<path d="M4 0v3M8 0v3M13 0v3M17 0v3" stroke={NAVY} /></svg>
                        <span className="ml-[11px]">Date created:</span><span className="ml-[11px] font-bold">7/30/2019 8:33:59 AM</span>
                      </div>
                    </div>
                    <div className="w-[501px] shrink-0 border-r border-[#e3e5e8] pl-[29px]">
                      <div className="h-[14px] leading-[14px] font-semibold text-[#7a7f88]">Active Blades:</div>
                      <div className="h-[20px] mt-[3px] flex items-center whitespace-nowrap">
                        <div className="w-[47px] flex items-center"><IpsShield id="b1" /><span className="ml-[9px]">IPS</span></div>
                        <div className="w-[75px] flex items-center"><AntiBot /><span className="ml-[9px]">Anti-Bot</span></div>
                        <div className="w-[84px] flex items-center"><AntiVirus /><span className="ml-[9px]">Anti-Virus</span></div>
                        <div className="w-[120px] flex items-center"><Emulation /><span className="ml-[8px]">Threat Emulation</span></div>
                        <div className="flex items-center"><Extraction /><span className="ml-[8px]">Threat Extraction</span></div>
                      </div>
                      <div className="h-[14px] mt-[8px] leading-[14px] font-semibold text-[#7a7f88]">Performance Impact:</div>
                      <div className="h-[20px] mt-px flex items-center"><Bar on={4} c="#ff8c22" /><span className="ml-[9px]">High or lower</span></div>
                      <div className="h-[14px] mt-[6px] leading-[14px] font-semibold text-[#7a7f88]">Severity:</div>
                      <div className="h-[20px] mt-px flex items-center"><Bar on={2} c="#ffd23f" /><span className="ml-[9px]">Low or above</span></div>
                      <div className="h-[14px] mt-[6px] leading-[14px] font-semibold text-[#7a7f88]">Confidence Level (Low, Medium, High):</div>
                      <div className="h-[20px] mt-[3px] flex items-center">
                        <div className="w-[66px] flex items-center"><ShieldDetect /><span className="ml-[9px]">Detect</span></div>
                        <div className="w-[70px] flex items-center"><ShieldPlain /><span className="ml-[9px]">Prevent</span></div>
                        <div className="flex items-center"><ShieldPlain /><span className="ml-[9px]">Prevent</span></div>
                      </div>
                    </div>
                    <div className="flex-1 min-w-0 overflow-hidden pl-[29px] whitespace-nowrap">
                      <div className="h-[14px] mt-[10px] leading-[14px] font-semibold text-[#7a7f88]">Core Activations:</div>
                      <div className="h-[18px] mt-[2px] leading-[18px] tracking-[-0.45px] text-[#3d8bf2]">39 IPS Core Protections</div>
                    </div>
                  </div>
                  <div className="mt-[33px] h-[13px] flex bg-[#dfe2e6] shrink-0">
                    <div className="ml-[13px] w-[1184px] bg-[#b0b3b6]" />
                  </div>
                </div>
              </div>
            </div>
          </div>
        </div>

        {/* Right rail */}
        <div className="w-[28px] shrink-0 flex flex-col items-end text-[12px] text-[#93a6bd]">
          <div className="w-full h-[19px] pt-[10px] pl-[13px]">
            <svg width="8" height="6" viewBox="0 0 8 6" fill="#a9b8cb" className="block"><path d="M3.500 0v6L0 3zM8 0v6L4.500 3z" /></svg>
          </div>
          <div className="w-[24px] h-[55px] bg-[#523043] text-[#e6eaf0] flex items-center justify-center"><span className="[writing-mode:vertical-rl]">Objects</span></div>
          <div className="w-[24px] h-[65px] mt-[3px] flex items-center justify-center"><span className="[writing-mode:vertical-rl]">Validations</span></div>
        </div>
      </div>

      {/* Status bar */}
      <div className="h-[27px] shrink-0 flex items-center pt-[3px] text-[11.500px] tracking-[-0.25px] text-[#93a6bd]">
        <div className="pl-[67px] w-[751px] shrink-0 flex items-center"><span>No tasks in progress</span><svg className="ml-[6px] mb-[1px]" width="6" height="4" viewBox="0 0 6 4"><path d="M0 4h6L3 .5z" fill="#a9b8cb" /></svg></div>
        <div className="flex items-center">
          <svg width="12" height="14" viewBox="0 0 12 14" fill="#a9b8cb"><ellipse cx="6" cy="2.500" rx="6" ry="2.500" /><path d="M0 4c1 1.500 11 1.500 12 0v3c-1 1.500-11 1.500-12 0zM0 8.500c1 1.500 11 1.500 12 0v3c-1 2-11 2-12 0z" /></svg>
          <span className="ml-[3px]">Cloud Demo Server</span>
          <svg className="ml-[5px]" width="6" height="4" viewBox="0 0 6 4"><path d="M0 4h6L3 .5z" fill="#a9b8cb" /></svg>
        </div>
        <div className="ml-auto flex items-center pr-[32px]">
          <span>6 Draft changes saved</span>
          <span className="w-px h-[18px] bg-[#4a5564] mx-[8px]" />
          <span>admin</span>
        </div>
      </div>
    </div>
  );
}
